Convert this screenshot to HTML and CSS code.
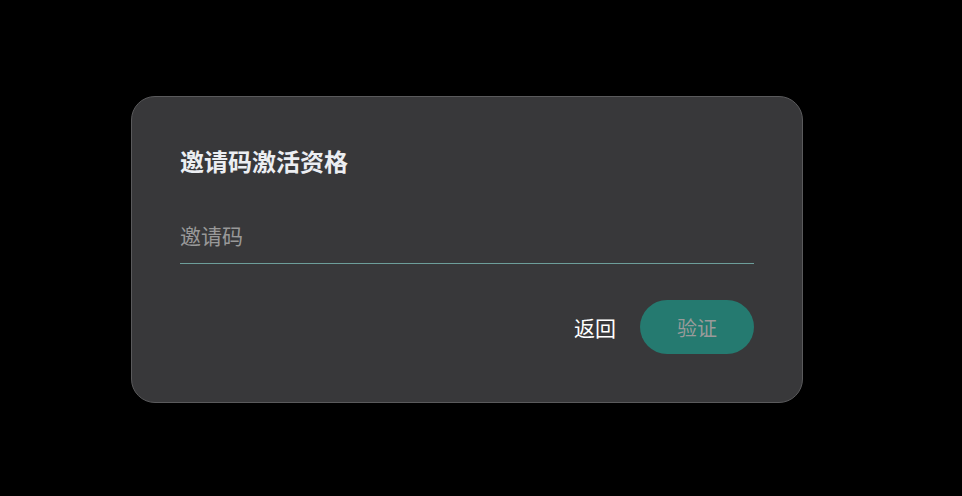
FILE: index.html
```html
<!DOCTYPE html>
<html lang="zh-CN">
<head>
    <meta charset="UTF-8">
    <title>邀请码激活资格</title>
    <link rel="stylesheet" href="styles.css">
</head>
<body>
    <div class="dialog">
        <h2 class="dialog-title">邀请码激活资格</h2>
        <div class="field">
            <input type="text" placeholder="邀请码">
        </div>
        <div class="actions">
            <button class="btn-text">返回</button>
            <button class="btn-primary" disabled>验证</button>
        </div>
    </div>
</body>
</html>
```

FILE: styles.css
```css
body {
  margin: 0;
  background: #000;
  font-family: "Liberation Sans", "Noto Sans CJK SC", sans-serif;
  height: 496px;
}

.dialog {
  position: relative;
  left: 131px;
  top: 96px;
  width: 672px;
  height: 307px;
  box-sizing: border-box;
  padding: 48px 48px 0 48px;
  background: #38383a;
  border: 1px solid #5a5a5c;
  border-radius: 24px;
}

.dialog-title {
  margin: 0;
  padding-top: 3px;
  font-size: 24px;
  font-weight: bold;
  color: #eceef2;
  line-height: 30px;
}

.field {
  margin-top: 45px;
  border-bottom: 1px solid #6d9e9a;
}
.field input {
  width: 100%;
  box-sizing: border-box;
  background: transparent;
  border: none;
  outline: none;
  padding: 0 0 12px 0;
  font-family: inherit;
  font-size: 21px;
  line-height: 28px;
  color: #ddd;
}
.field input::placeholder {
  color: #999;
}

.actions {
  display: flex;
  justify-content: flex-end;
  align-items: center;
  gap: 24px;
  margin-top: 36px;
}

.btn-text {
  background: none;
  border: none;
  padding: 0;
  font-family: inherit;
  font-size: 21px;
  color: #fff;
}

.btn-primary {
  width: 114px;
  height: 54px;
  border: none;
  border-radius: 27px;
  background: #257a70;
  font-family: inherit;
  font-size: 20px;
  color: #9a9a9a;
}
```
